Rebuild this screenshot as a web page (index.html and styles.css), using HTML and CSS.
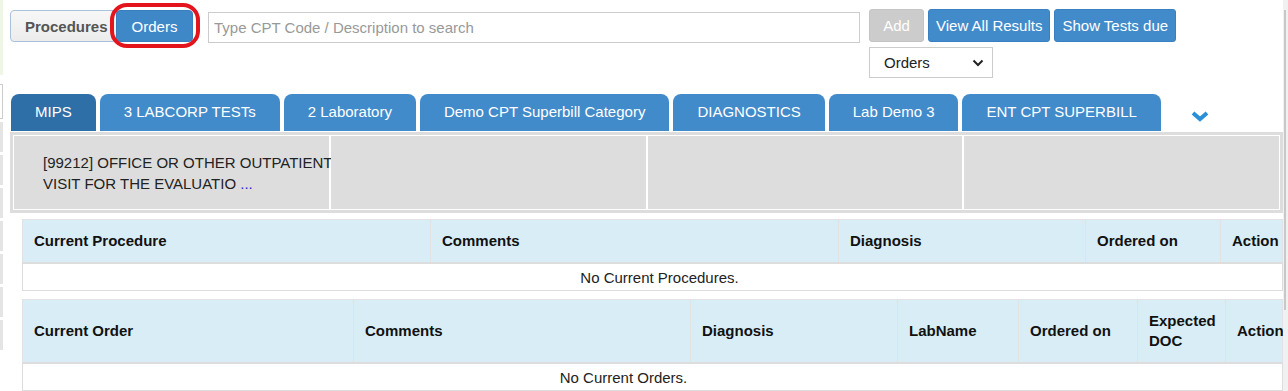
FILE: index.html
```html
<!DOCTYPE html>
<html lang="en">
<head>
    <meta charset="UTF-8">
    <meta name="viewport" content="width=device-width, initial-scale=1.0">
    <title>Procedures / Orders</title>
    <link rel="stylesheet" href="styles.css">
</head>
<body>
<div class="page">
    <!-- left edge of the side panel behind -->
    <div class="rail-left">
        <div class="rail-green"></div>
        <div class="rail-box"></div>
        <div class="rail-seg"></div>
        <div class="rail-seg"></div>
        <div class="rail-seg"></div>
        <div class="rail-seg"></div>
        <div class="rail-seg"></div>
        <div class="rail-seg"></div>
        <div class="rail-seg"></div>
    </div>

    <div class="main">
        <!-- Search bar -->
        <div class="topbar">
            <div class="toggle">
                <button class="btn-proc">Procedures</button>
                <button class="btn-orders">Orders</button>
                <span class="ring"></span>
            </div>
            <input type="text" class="search" placeholder="Type CPT Code / Description to search">
            <div class="actions">
                <div class="action-row">
                    <button class="btn btn-disabled">Add</button>
                    <button class="btn">View All Results</button>
                    <button class="btn">Show Tests due</button>
                </div>
                <div class="select">
                    <span>Orders</span>
                    <svg width="12" height="8" viewBox="0 0 12 8"><polyline points="1.5,1.5 6,6 10.5,1.5" fill="none" stroke="#222" stroke-width="2"/></svg>
                </div>
            </div>
        </div>

        <!-- Superbill tabs -->
        <div class="tabs">
            <a class="tab active">MIPS</a>
            <a class="tab">3 LABCORP TESTs</a>
            <a class="tab">2 Laboratory</a>
            <a class="tab">Demo CPT Superbill Category</a>
            <a class="tab">DIAGNOSTICS</a>
            <a class="tab">Lab Demo 3</a>
            <a class="tab">ENT CPT SUPERBILL</a>
            <span class="more">
                <svg width="20" height="12" viewBox="0 0 20 12"><polyline points="3,3 10,9 17,3" fill="none" stroke="#2a8fd6" stroke-width="4"/></svg>
            </span>
        </div>
        <div class="panel">
            <div class="cell"><div class="cell-text">[99212] OFFICE OR OTHER OUTPATIENT VISIT FOR THE EVALUATIO <span class="dots">...</span></div></div>
            <div class="cell"></div>
            <div class="cell"></div>
            <div class="cell"></div>
        </div>

        <!-- Current procedures -->
        <table class="grid first">
            <colgroup>
                <col style="width:408px">
                <col style="width:408px">
                <col style="width:247px">
                <col style="width:135px">
                <col>
            </colgroup>
            <thead>
                <tr>
                    <th>Current Procedure</th>
                    <th>Comments</th>
                    <th>Diagnosis</th>
                    <th>Ordered on</th>
                    <th>Action</th>
                </tr>
            </thead>
            <tbody>
                <tr><td colspan="5" class="empty-proc">No Current Procedures.</td></tr>
            </tbody>
        </table>

        <!-- Current orders -->
        <table class="grid">
            <colgroup>
                <col style="width:331px">
                <col style="width:337px">
                <col style="width:207px">
                <col style="width:121px">
                <col style="width:119px">
                <col style="width:88px">
                <col>
            </colgroup>
            <thead>
                <tr>
                    <th>Current Order</th>
                    <th>Comments</th>
                    <th>Diagnosis</th>
                    <th>LabName</th>
                    <th>Ordered on</th>
                    <th>Expected DOC</th>
                    <th>Action</th>
                </tr>
            </thead>
            <tbody>
                <tr><td colspan="7" class="empty-order">No Current Orders.</td></tr>
            </tbody>
        </table>
    </div>

    <div class="rail-right"><div class="thumb"></div></div>
</div>
</body>
</html>
```

FILE: styles.css
```css
body {
    margin: 0;
    font-family: "Liberation Sans", Arial, sans-serif;
    font-size: 15px;
    color: #222;
    background: #fff;
    overflow: hidden;
}
.page {
    display: flex;
    height: 391px;
}
.rail-left {
    width: 3px;
    flex-shrink: 0;
    display: flex;
    flex-direction: column;
}
.rail-green {
    height: 75px;
    background: #eef7e6;
}
.rail-box {
    height: 33px;
    margin-top: 9px;
    border: 1px solid #ccc;
    border-left: none;
}
.rail-seg {
    height: 30px;
    margin-top: 3px;
    background: #e4e4e4;
}
.rail-right {
    width: 5px;
    flex-shrink: 0;
    background: #f1f1f1;
    padding-top: 10px;
}
.thumb {
    width: 2px;
    height: 300px;
    margin-left: 1px;
    background: #c8c8c8;
}
.main {
    flex: 1;
    min-width: 0;
    padding-left: 7px;
}

/* top bar */
.topbar {
    display: flex;
    align-items: flex-start;
    height: 78px;
}
.toggle {
    position: relative;
    display: flex;
    margin-top: 10px;
}
.toggle button {
    height: 32px;
    font-family: inherit;
    font-size: 15px;
    border-radius: 4px;
    cursor: pointer;
}
.btn-proc {
    width: 108px;
    padding: 0 0 0 14px;
    text-align: left;
    font-weight: bold;
    color: #555;
    background: linear-gradient(#f7f7f7, #ececec);
    border: 1px solid #a9c2dc;
}
.btn-orders {
    width: 77px;
    margin-left: -2px;
    padding: 0;
    color: #fff;
    background: #3f88c8;
    border: 1px solid #3a7fbd;
}
.ring {
    position: absolute;
    left: 100px;
    top: -7px;
    width: 82px;
    height: 37px;
    border: 4px solid #e3141c;
    border-radius: 17px;
}
.search {
    width: 652px;
    height: 31px;
    box-sizing: border-box;
    margin: 12px 0 0 15px;
    padding: 0 5px;
    border: 1px solid #ccc;
    font-family: inherit;
    font-size: 15px;
    color: #555;
}
.search::placeholder {
    color: #999;
}
.actions {
    margin: 9px 0 0 9px;
}
.action-row {
    display: flex;
    gap: 4px;
}
.btn {
    height: 33px;
    padding: 0 7px;
    font-family: inherit;
    font-size: 15px;
    color: #fff;
    background: #428bca;
    border: 1px solid #3a80c0;
    border-radius: 3px;
}
.btn-disabled {
    width: 55px;
    background: #ccc;
    border-color: #c4c4c4;
}
.select {
    width: 124px;
    height: 31px;
    box-sizing: border-box;
    margin-top: 5px;
    padding: 0 8px 0 14px;
    border: 1px solid #ccc;
    display: flex;
    align-items: center;
    justify-content: space-between;
    color: #222;
}

/* tabs */
.tabs {
    display: flex;
    gap: 4px;
    margin-top: 16px;
    margin-left: 1px;
}
.tab {
    height: 37px;
    line-height: 36px;
    padding: 0 24px;
    text-align: center;
    color: #fff;
    background: #428bca;
    border-radius: 8px 8px 0 0;
    white-space: nowrap;
}
.tab.active {
    background: #2f6fa7;
}
.more {
    margin-left: 25px;
    padding-top: 14px;
}
.panel {
    margin-top: 1px;
    display: grid;
    grid-template-columns: repeat(4, 1fr);
    gap: 2px;
    padding: 1px;
    border: 3px solid #ddd;
    background: #fff;
}
.cell {
    height: 73px;
    box-sizing: border-box;
    padding: 16px 0 0 29px;
    line-height: 21px;
    background: #ddd;
    color: #222;
}
.cell-text {
    margin-right: -8px;
}
.dots {
    color: #2b2bd4;
}

/* tables */
.grid {
    width: 1261px;
    margin-left: 12px;
    border-collapse: collapse;
    table-layout: fixed;
}
.grid.first {
    margin-top: 6px;
    margin-bottom: 8px;
}
.grid th {
    text-align: left;
    padding: 11px 8px 11px 11px;
    line-height: 20px;
    background: #d9edf6;
    color: #111;
    border: 1px solid #e2e2e2;
    border-bottom: 2px solid #ddd;
}
.grid td {
    text-align: center;
    height: 26px;
    padding: 0;
    border: 1px solid #ddd;
    border-top: none;
}
.grid td.empty-proc {
    padding-left: 14px;
}
.grid td.empty-order {
    padding-right: 58px;
}
```
